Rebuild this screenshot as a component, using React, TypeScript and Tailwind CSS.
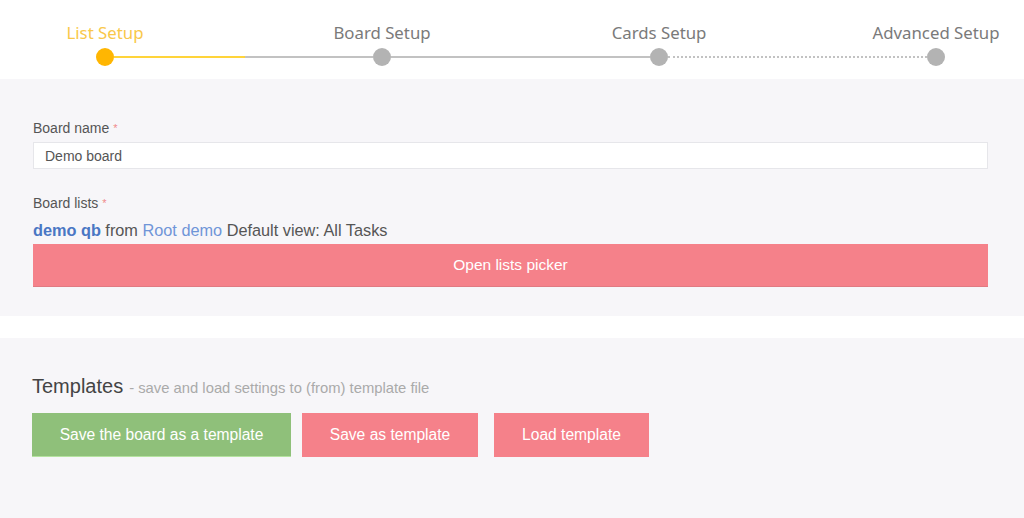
import React from "react";

const steps = ["List Setup", "Board Setup", "Cards Setup", "Advanced Setup"];

function Step({ label, active }: { label: string; active?: boolean }) {
  return (
    <div className="flex w-[18px] flex-col items-center">
      <span
        className={`whitespace-nowrap text-[16.8px] leading-[24px] ${
          active ? "text-[#f9c84a]" : "text-[#7a7a7a]"
        }`}
      >
        {label}
      </span>
      <span
        className={`mt-[3px] h-[18px] w-[18px] rounded-full ${
          active ? "bg-[#ffb602]" : "bg-[#b3b3b3]"
        }`}
      />
    </div>
  );
}

function Stepper() {
  return (
    <div className="flex h-[79px] items-start bg-white pl-[96px] pr-[79px] pt-[21px]">
      <Step label={steps[0]} active />
      {/* done -> current: half yellow, half grey */}
      <div className="mt-[35px] flex flex-1">
        <div className="h-[2px] w-[131px] bg-[#ffd43a]" />
        <div className="h-[2px] flex-1 bg-[#c2c2c2]" />
      </div>
      <Step label={steps[1]} />
      <div className="mt-[35px] h-[2px] flex-1 bg-[#c2c2c2]" />
      <Step label={steps[2]} />
      <div className="mt-[35px] flex-1 border-t-2 border-dotted border-[#c2c2c2]" />
      <Step label={steps[3]} />
    </div>
  );
}

function Label({ children }: { children: React.ReactNode }) {
  return (
    <div className="text-[14px] leading-[20px] text-[#555]">
      {children} <span className="text-[11px] align-top text-[#f08a8a]">*</span>
    </div>
  );
}

export default function App() {
  return (
    <div
      className="h-[518px] w-[1024px] overflow-hidden bg-[#f7f6f9] text-[#444]"
      style={{ fontFamily: '"Liberation Sans", Arial, sans-serif' }}
    >
      <div style={{ fontFamily: '"Noto Sans", "Open Sans", sans-serif' }}>
        <Stepper />
      </div>

      {/* List setup form */}
      <div className="bg-[#f7f6f9] pb-[29px] pl-[33px] pr-[36px] pt-[39px]">
        <Label>Board name</Label>
        <input
          type="text"
          defaultValue="Demo board"
          className="mt-[4px] block h-[27px] w-full border border-[#e6e6ea] bg-white px-[11px] text-[14px] text-[#555] outline-none"
        />

        <div className="mt-[24px]">
          <Label>Board lists</Label>
        </div>
        <div className="mt-[6px] text-[16.3px] leading-[22px] text-[#555]">
          <span className="font-bold text-[#4a77c4]">demo qb</span> from{" "}
          <span className="text-[#6f95d8]">Root demo</span> Default view: All Tasks
        </div>
        <button
          type="button"
          className="mt-[3px] block h-[43px] w-full border-b border-[#e07a82] bg-[#f5818a] text-[15.5px] text-white"
        >
          Open lists picker
        </button>
      </div>

      <div className="h-[22px] bg-white" />

      {/* Templates */}
      <div className="bg-[#f7f6f9] pl-[32px] pt-[34px]">
        <div className="flex items-baseline">
          <span className="text-[20px] leading-[28px] text-[#444]">Templates</span>
          <span className="ml-[6px] text-[14.8px] text-[#aaa]">
            - save and load settings to (from) template file
          </span>
        </div>
        <div className="mt-[13px] flex">
          <button
            type="button"
            className="h-[44px] w-[259px] border-b border-[#b5e3a0] bg-[#8fc07a] text-[15.6px] text-white"
          >
            Save the board as a template
          </button>
          <button
            type="button"
            className="ml-[11px] h-[44px] w-[176px] bg-[#f5818a] text-[15.6px] text-white"
          >
            Save as template
          </button>
          <button
            type="button"
            className="ml-[16px] h-[44px] w-[155px] bg-[#f5818a] text-[15.6px] text-white"
          >
            Load template
          </button>
        </div>
      </div>
    </div>
  );
}
